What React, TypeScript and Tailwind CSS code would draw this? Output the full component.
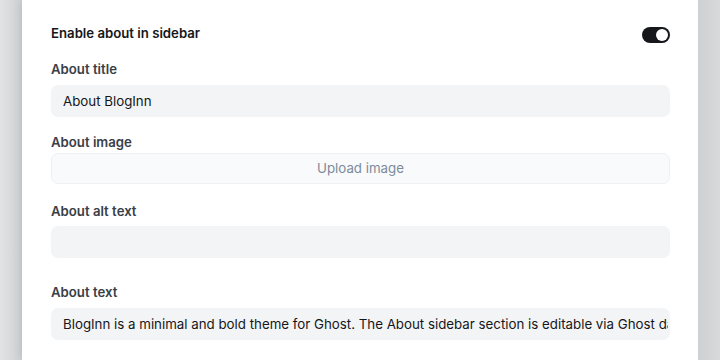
import React from "react";

const font = { fontFamily: "Inter, 'Noto Sans', sans-serif" };

const Label = ({ text, className = "" }: { text: string; className?: string }) => (
  <p className={`text-[13.2px] leading-5 font-semibold text-[#394047] ${className}`}>{text}</p>
);

const TextBox = ({ value = "", className = "" }: { value?: string; className?: string }) => (
  <input
    readOnly
    value={value}
    style={font}
    className={`block w-full h-[32px] rounded-[7px] bg-[#f3f4f6] pl-3 pr-[2px] outline-none text-[13.3px] text-[#15171a] ${className}`}
  />
);

export default function App() {
  return (
    <div style={font} className="w-[720px] h-[360px] overflow-hidden flex bg-[#dcdddf]">
      <div className="w-[22px] shrink-0 bg-gradient-to-r from-[#e2e3e5] to-[#cfd0d3]" />
      <div className="w-[676px] shrink-0 bg-white pl-[29px] pr-[28px] pt-[23px] shadow-[0_0_10px_rgba(0,0,0,0.12)]">
        <div className="flex justify-between items-start">
          <p className="text-[13.2px] leading-5 font-semibold text-[#15171a]">Enable about in sidebar</p>
          <div className="mt-[4px] w-[28px] h-[16px] rounded-full bg-[#15171a] flex items-center justify-end pr-[2px]">
            <div className="w-[12px] h-[12px] rounded-full bg-white" />
          </div>
        </div>

        <Label text="About title" className="mt-[16px]" />
        <TextBox value="About BlogInn" className="mt-[6px]" />

        <Label text="About image" className="mt-[15px]" />
        <div className="mt-[1px] h-[31px] rounded-[7px] bg-[#f9fafb] border border-[#eff0f1] flex items-center justify-center text-[13.3px] text-[#7c8b9a]">
          Upload image
        </div>

        <Label text="About alt text" className="mt-[17px]" />
        <TextBox className="mt-[5px]" />

        <Label text="About text" className="mt-[24px]" />
        <TextBox
          value="BlogInn is a minimal and bold theme for Ghost. The About sidebar section is editable via Ghost dashboard."
          className="mt-[6px]"
        />
      </div>
      <div className="flex-1 bg-gradient-to-r from-[#cfd0d3] to-[#d8d9db]" />
    </div>
  );
}
